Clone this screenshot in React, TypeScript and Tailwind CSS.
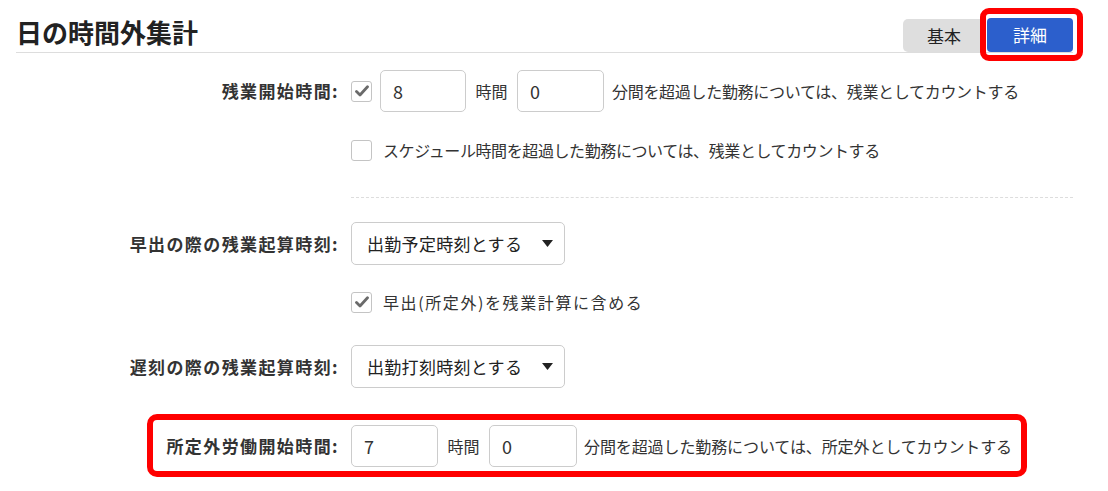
import React from "react";

const font = { fontFamily: '"Noto Sans CJK JP", "Noto Sans", sans-serif' };

const Check = ({ checked }: { checked?: boolean }) => (
  <span className="flex h-[21px] w-[21px] shrink-0 items-center justify-center rounded-[3px] border border-[#c4c4c4] bg-white">
    {checked && (
      <svg width="14" height="12" viewBox="0 0 14 12">
        <path d="M1.5 6.5 L5 10 L12.5 1.8" fill="none" stroke="#6a6a6a" strokeWidth="2.8" strokeLinecap="round" strokeLinejoin="round" />
      </svg>
    )}
  </span>
);

const NumInput = ({ value, w }: { value: string; w: string }) => (
  <div className={`flex h-[42px] ${w} shrink-0 items-center rounded-[5px] border border-[#cccccc] bg-white pl-[12px] text-[18px] tracking-normal text-[#333]`}>
    {value}
  </div>
);

const Select = ({ value }: { value: string }) => (
  <div className="flex h-[43px] w-[214px] items-center justify-between rounded-[5px] border border-[#cccccc] bg-white pl-[15px] pr-[11px] text-[17px] tracking-[0.3px] text-[#222]">
    <span>{value}</span>
    <svg width="11" height="7" viewBox="0 0 11 7">
      <path d="M0 0 H11 L5.5 7 Z" fill="#222" />
    </svg>
  </div>
);

const Label = ({ children }: { children: React.ReactNode }) => (
  <div className="w-[340px] shrink-0 pr-[1px] text-right text-[17px] font-bold tracking-[1.4px] text-[#333]">
    {children}
  </div>
);

const Hours = () => <span className="w-[51px] shrink-0 text-center tracking-normal">時間</span>;

export default function App() {
  return (
    <div className="h-[491px] w-[1108px] overflow-hidden bg-white text-[#333]" style={font}>
      {/* header */}
      <div className="ml-[16px] mr-[35px] flex h-[53px] items-end justify-between border-b border-[#dddddd]">
        <h1 className="mb-[5px] text-[26px] font-bold leading-[31px] text-[#222]">日の時間外集計</h1>
        <div className="flex items-end gap-[2px]">
          <button className="flex h-[33px] w-[82px] items-center justify-center rounded-l-[5px] bg-[#dedede] text-[17px] text-[#222]">
            基本
          </button>
          <div className="relative">
            <button className="flex h-[34px] w-[86px] items-center justify-center rounded-[4px] bg-[#2c5fcc] text-[17px] text-white">
              詳細
            </button>
            <span className="pointer-events-none absolute -bottom-[9px] -left-[7px] -right-[10px] -top-[10px] rounded-[9px] border-[6px] border-[#ff0000]" />
          </div>
        </div>
      </div>

      {/* row 1 */}
      <div className="mt-[17px] flex items-center">
        <Label>残業開始時間:</Label>
        <div className="ml-[11px] flex items-center text-[16px] tracking-[-0.3px]">
          <Check checked />
          <div className="ml-[8px]">
            <NumInput value="8" w="w-[86px]" />
          </div>
          <Hours />
          <NumInput value="0" w="w-[87px]" />
          <span className="ml-[8px]">分間を超過した勤務については、残業としてカウントする</span>
        </div>
      </div>

      {/* row 2 */}
      <div className="mt-[26px] flex h-[24px] items-center">
        <div className="w-[340px] shrink-0" />
        <div className="ml-[11px] flex items-center text-[16px] tracking-[-0.4px]">
          <Check />
          <span className="ml-[11px]">スケジュール時間を超過した勤務については、残業としてカウントする</span>
        </div>
      </div>

      <div className="ml-[351px] mr-[35px] mt-[35px] border-t border-dashed border-[#dddddd]" />

      {/* row 3 */}
      <div className="mt-[24px] flex items-center">
        <Label>早出の際の残業起算時刻:</Label>
        <div className="ml-[11px]">
          <Select value="出勤予定時刻とする" />
        </div>
      </div>

      {/* row 4 */}
      <div className="mt-[25px] flex h-[24px] items-center">
        <div className="w-[340px] shrink-0" />
        <div className="ml-[11px] flex items-center text-[16px] tracking-[1.6px]">
          <Check checked />
          <span className="ml-[11px]">早出(所定外)を残業計算に含める</span>
        </div>
      </div>

      {/* row 5 */}
      <div className="mt-[31px] flex items-center">
        <Label>遅刻の際の残業起算時刻:</Label>
        <div className="ml-[11px]">
          <Select value="出勤打刻時刻とする" />
        </div>
      </div>

      {/* row 6 */}
      <div className="relative mt-[37px] flex items-center">
        <Label>所定外労働開始時間:</Label>
        <div className="ml-[11px] flex items-center text-[16px] tracking-[-0.1px]">
          <NumInput value="7" w="w-[87px]" />
          <Hours />
          <NumInput value="0" w="w-[88px]" />
          <span className="ml-[7px]">分間を超過した勤務については、所定外としてカウントする</span>
        </div>
        <span className="pointer-events-none absolute -top-[11px] left-[147px] h-[63px] w-[880px] rounded-[10px] border-[6px] border-[#ff0000]" />
      </div>
    </div>
  );
}
